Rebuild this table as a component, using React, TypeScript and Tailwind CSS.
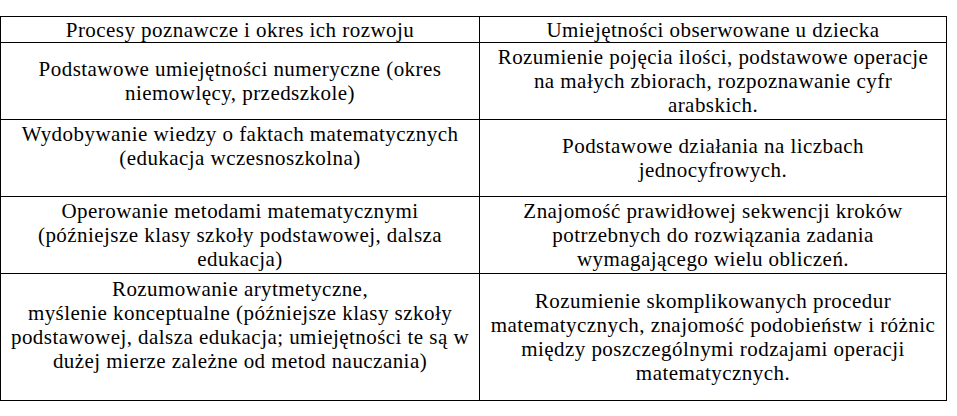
const rows: { h: string; left: string[]; right: string[] }[] = [
  {
    h: "h-[26px]",
    left: ["Procesy poznawcze i okres ich rozwoju"],
    right: ["Umiejętności obserwowane u dziecka"],
  },
  {
    h: "h-[77px]",
    left: ["Podstawowe umiejętności numeryczne (okres", "niemowlęcy, przedszkole)"],
    right: [
      "Rozumienie pojęcia ilości, podstawowe operacje",
      "na małych zbiorach, rozpoznawanie cyfr",
      "arabskich.",
    ],
  },
  {
    h: "h-[77px]",
    left: ["Wydobywanie wiedzy o faktach matematycznych", "(edukacja wczesnoszkolna)", ""],
    right: ["Podstawowe działania na liczbach", "jednocyfrowych."],
  },
  {
    h: "h-[77px]",
    left: [
      "Operowanie metodami matematycznymi",
      "(późniejsze klasy szkoły podstawowej, dalsza",
      "edukacja)",
    ],
    right: [
      "Znajomość prawidłowej sekwencji kroków",
      "potrzebnych do rozwiązania zadania",
      "wymagającego wielu obliczeń.",
    ],
  },
  {
    h: "h-[127px]",
    left: [
      "Rozumowanie arytmetyczne,",
      "myślenie konceptualne (późniejsze klasy szkoły",
      "podstawowej, dalsza edukacja; umiejętności te są w",
      "dużej mierze zależne od metod nauczania)",
      "",
    ],
    right: [
      "Rozumienie skomplikowanych procedur",
      "matematycznych, znajomość podobieństw i różnic",
      "między poszczególnymi rodzajami operacji",
      "matematycznych.",
    ],
  },
];

function Cell({ h, lines, wide }: { h: string; lines: string[]; wide: boolean }) {
  return (
    <div
      className={
        (wide ? "w-[479px] " : "w-[467px] ") +
        h +
        " border-r border-b border-black flex flex-col items-center justify-center"
      }
    >
      {lines.map((line, i) => (
        <div
          key={i}
          className="h-[24px] whitespace-nowrap font-['Liberation_Serif',serif] text-[21px] leading-[24px] tracking-[0.45px]"
        >
          {line}
        </div>
      ))}
    </div>
  );
}

export default function App() {
  return (
    <div className="w-[957px] h-[416px] bg-white pt-[16px] text-black font-['Liberation_Serif',serif]">
      <div className="w-[947px] border-l border-t border-black">
        {rows.map((row, i) => (
          <div key={i} className="flex">
            <Cell h={row.h} lines={row.left} wide={true} />
            <Cell h={row.h} lines={row.right} wide={false} />
          </div>
        ))}
      </div>
    </div>
  );
}
